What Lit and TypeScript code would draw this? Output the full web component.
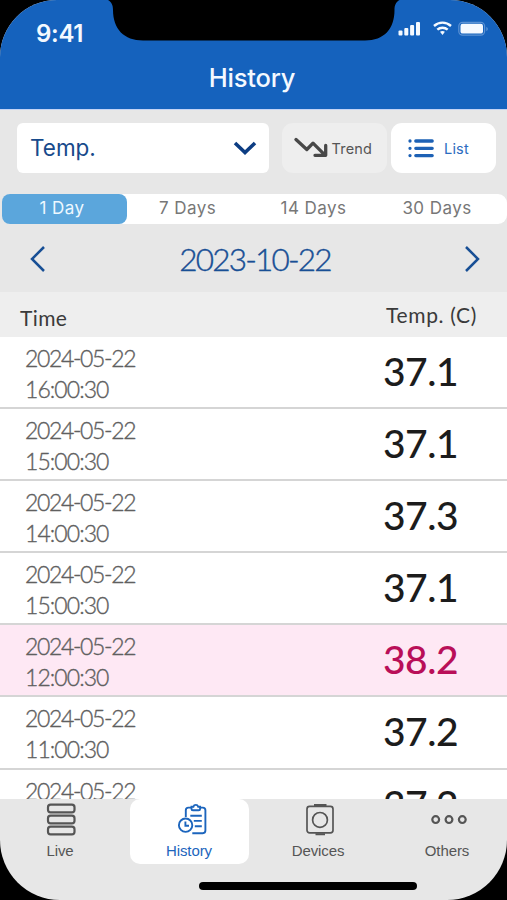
import { LitElement, html, css, svg } from "lit";
import { customElement } from "lit/decorators.js";
import { classMap } from "lit/directives/class-map.js";

interface Reading {
  date: string;
  time: string;
  value: string;
  alert?: boolean;
}

const READINGS: Reading[] = [
  { date: "2024-05-22", time: "16:00:30", value: "37.1" },
  { date: "2024-05-22", time: "15:00:30", value: "37.1" },
  { date: "2024-05-22", time: "14:00:30", value: "37.3" },
  { date: "2024-05-22", time: "15:00:30", value: "37.1" },
  { date: "2024-05-22", time: "12:00:30", value: "38.2", alert: true },
  { date: "2024-05-22", time: "11:00:30", value: "37.2" },
  { date: "2024-05-22", time: "", value: "37.2" },
];

const RANGES = ["1 Day", "7 Days", "14 Days", "30 Days"];

const TABS = [
  {
    name: "Live",
    icon: svg`<g stroke-width="2.200">
      <rect x="6" y="2.600" width="26.500" height="7.800" rx="2.600"/>
      <rect x="6" y="13.600" width="26.500" height="7.800" rx="2.600"/>
      <rect x="6" y="24.600" width="26.500" height="7.800" rx="2.600"/></g>`,
  },
  {
    name: "History",
    icon: svg`<g stroke-width="1.900" transform="translate(5.800 0)">
      <path d="M9 15V8.200a2.600 2.600 0 0 1 2.600-2.600H14.500M23.600 5.600H26a2.600 2.600 0 0 1 2.600 2.600V28.600a2.600 2.600 0 0 1-2.600 2.600H15.500"/>
      <path d="M14.700 4.700h1.900a2.500 2.500 0 0 1 4.800 0h1.900v2.200a1.400 1.400 0 0 1-1.400 1.400h-5.800a1.400 1.400 0 0 1-1.400-1.400z"/>
      <circle cx="8.800" cy="23.200" r="6.700"/>
      <path d="M8.600 19.500v4.200h3.600M13.500 13.700h11.500M17 18.900H25M18 24.300H25"/></g>`,
  },
  {
    name: "Devices",
    icon: svg`<g stroke-width="1.700" transform="translate(1.500 0)">
      <rect x="5.500" y="4.300" width="26" height="26.500" rx="2.600"/>
      <circle cx="18.500" cy="17.900" r="7.400"/>
      <path stroke-width="2" d="M12.500 2.900h12.500M14 32.200h9.500"/></g>`,
  },
  {
    name: "Others",
    icon: svg`<g stroke-width="2.200" transform="translate(4 0)">
      <circle cx="6.700" cy="17.600" r="3.400"/>
      <circle cx="20" cy="17.600" r="3.400"/>
      <circle cx="33.300" cy="17.600" r="3.400"/></g>`,
  },
];

@customElement("app-root")
export class AppRoot extends LitElement {
  static styles = css`
    :host {
      display: block;
      width: 507px;
      height: 900px;
      background: #000;
      overflow: hidden;
      font-family: Inter, sans-serif;
    }
    * { box-sizing: border-box; }
    svg { display: block; fill: none; flex: none; }
    .screen {
      position: relative;
      height: 900px;
      display: flex;
      flex-direction: column;
      overflow: hidden;
      background: #e7e7e7;
      border-radius: 57px 57px 60px 60px;
      white-space: nowrap;
    }
    .head {
      height: 110px;
      flex: none;
      background: #1562bd;
      border-bottom: 1px solid #c3d3f5;
      color: #f4f9ff;
    }
    .notch { position: absolute; left: 0; top: 0; }
    .status {
      height: 56px;
      padding: 10px 18px 0 36px;
      display: flex;
      justify-content: space-between;
    }
    .signals { margin-top: 9px; }
    .clock { font-size: 24px; line-height: 47px; font-weight: 600; letter-spacing: -0.300px; }
    .title {
      text-align: center;
      font-size: 25.500px;
      line-height: 44px;
      font-weight: 500;
      letter-spacing: -0.200px;
      padding-right: 3px;
    }
    .filters {
      height: 84px;
      flex: none;
      display: flex;
      padding: 13px 11px 0 17px;
    }
    .select, .mode {
      height: 49.500px;
      border-radius: 8px;
      background: #fff;
      display: flex;
      align-items: center;
    }
    .select {
      width: 251.500px;
      padding: 0 12px 0 13px;
      justify-content: space-between;
      color: #174a8b;
      font-size: 22.500px;
      letter-spacing: 0;
      border-radius: 6px;
      margin-right: 13px;
    }
    .mode { width: 105px; font-size: 14.500px; border-radius: 11px; letter-spacing: 0.200px; padding-top: 2px; }
    .trend { background: #eee; color: #555; padding-left: 12px; gap: 4px; margin-right: 4.500px; }
    .list { color: #2b6cc0; padding-left: 16px; gap: 9px; }
    .mode svg { margin-top: -2px; }
    .ranges {
      height: 30px;
      flex: none;
      margin: 0 0 0 2px;
      border-radius: 9px;
      background: #fff;
      display: grid;
      grid-template-columns: 125px 121px 131px 1fr;
      color: #777;
      font-size: 17px;
      line-height: 29px;
      text-align: center;
      letter-spacing: 0.450px;
    }
    .range.on { background: #5ba6dc; color: #eef8ff; border-radius: 8px; padding-right: 5px; }
    .range:last-child { padding-right: 12px; }
    .day {
      height: 68px;
      flex: none;
      display: flex;
      align-items: center;
      justify-content: space-between;
      padding: 2px 26px 0 29px;
      font-family: Lato, sans-serif;
      font-weight: 300;
      font-size: 31.500px;
      color: #184f95;
      letter-spacing: -1.800px;
      -webkit-text-stroke: 0.400px currentColor;
    }
    .columns {
      height: 45px;
      flex: none;
      background: #eee;
      display: flex;
      justify-content: space-between;
      padding: 0 30px 0 20px;
      font-family: Lato, sans-serif;
      font-size: 21px;
      color: #3a3a3a;
      letter-spacing: 0.400px;
    }
    .col-time { line-height: 52px; }
    .col-temp { line-height: 46px; letter-spacing: 0.650px; }
    .rows { flex: 1; min-height: 0; overflow: hidden; background: #fff; }
    .row {
      height: 72.100px;
      border-bottom: 2px solid #d5d5d5;
      padding: 6px 49px 0 25px;
      display: flex;
      justify-content: space-between;
      font-family: Lato, sans-serif;
    }
    .row.alert { background: #fee8f4; }
    .when {
      font-size: 23px;
      line-height: 31px;
      font-weight: 300;
      color: #606060;
      letter-spacing: -1.350px;
      -webkit-text-stroke: 0.350px currentColor;
    }
    .time { letter-spacing: -0.950px; }
    .value {
      font-size: 39px;
      line-height: 57px;
      font-weight: 500;
      font-kerning: none;
      color: #1c1c1c;
      width: 75px;
      letter-spacing: -0.500px;
    }
    .alert .value { color: #b90f58; }
    .tabs {
      height: 101px;
      flex: none;
      display: grid;
      grid-template-columns: 119px 119px 119px 119px;
      justify-content: center;
      column-gap: 10px;
      padding-left: 1px;
      position: relative;
      font-family: "Liberation Sans", sans-serif;
    }
    .tab {
      height: 65px;
      border-radius: 10px;
      display: flex;
      flex-direction: column;
      align-items: center;
      color: #555;
      font-size: 15px;
      letter-spacing: -0.100px;
      line-height: 17px;
      padding-top: 3px;
      padding-right: 1px;
      gap: 5px;
    }
    .tab svg { stroke: currentColor; }
    .tab.on { color: #1c65bd; background: #fff; }
    .homebar {
      position: absolute;
      left: 199px;
      bottom: 10px;
      width: 218px;
      height: 8.500px;
      border-radius: 5px;
      background: #000;
    }
  `;

  render() {
    return html`
      <div class="screen">
        <div class="head">
          <svg class="notch" width="507" height="42" viewBox="0 0 507 42">
            <path fill="#000" d="M108 0C111.500 2 113 5 113 10C113 29 124 40.500 143 40.500H365C384 40.500 394.500 29 394.500 10C394.500 5 396 2 399.500 0Z"/>
          </svg>
          <div class="status">
            <span class="clock">9:41</span>
            <svg class="signals" width="92" height="20" viewBox="0 0 92 20">
              <g fill="#f4f9ff">
                <rect x="1.500" y="11.500" width="4" height="5" rx="1"/>
                <rect x="7.300" y="9" width="4" height="7.500" rx="1"/>
                <rect x="13.100" y="6" width="4" height="10.500" rx="1"/>
                <rect x="19" y="3" width="4" height="13.500" rx="1"/>
                <path d="M43 12.800c1.300-1.100 3.600-1.100 4.900 0L45.500 16z"/>
                <rect x="63.500" y="4.800" width="22.500" height="9.800" rx="2.200"/>
              </g>
              <g stroke="#f4f9ff" stroke-width="2.400">
                <path d="M37 7c4.900-4.500 12.100-4.500 17 0"/>
                <path d="M40.300 10.700c3-2.700 7.400-2.700 10.400 0"/>
              </g>
              <rect x="61.800" y="3.300" width="25.800" height="12.800" rx="3.800" stroke="#5b92d4" stroke-width="1.200"/>
              <path d="M89.300 8v4c1-.300 1.500-1 1.500-2s-.500-1.700-1.500-2z" fill="#5b92d4"/>
            </svg>
          </div>
          <div class="title">History</div>
        </div>

        <div class="filters">
          <div class="select">
            <span>Temp.</span>
            <svg width="24" height="16" viewBox="0 0 24 16">
              <path d="M2 3l10 9.500L22 3" stroke="#0d3d83" stroke-width="3.600"/>
            </svg>
          </div>
          <div class="mode trend">
            <svg width="34" height="24" viewBox="0 0 34 24">
              <path d="M2 3.500l10.800 10 6.200-6.300L30.500 18.700M21 19.300h10.700V9.500" stroke="#484848" stroke-width="3.300" stroke-linecap="round" stroke-linejoin="round"/>
            </svg>
            <span>Trend</span>
          </div>
          <div class="mode list">
            <svg width="28" height="22" viewBox="0 0 28 22">
              <path d="M8.800 4h16.400M8.800 11.300h16.400M8.800 18.600h16.400M3 4h.01M3 11.300h.01M3 18.600h.01" stroke="#1d61b5" stroke-width="3.300" stroke-linecap="round"/>
            </svg>
            <span>List</span>
          </div>
        </div>

        <div class="ranges">
          ${RANGES.map((r, i) => html`<div class=${classMap({ range: true, on: i === 0 })}>${r}</div>`)}
        </div>

        <div class="day">
          <svg width="18" height="28" viewBox="0 0 18 28">
            <path d="M15 2L3 14l12 12" stroke="#184f95" stroke-width="2.500"/>
          </svg>
          <span>2023-10-22</span>
          <svg width="18" height="28" viewBox="0 0 18 28">
            <path d="M3 2l12 12L3 26" stroke="#184f95" stroke-width="2.500"/>
          </svg>
        </div>

        <div class="columns">
          <span class="col-time">Time</span>
          <span class="col-temp">Temp. (C)</span>
        </div>

        <div class="rows">
          ${READINGS.map(
            (r) => html`<div class=${classMap({ row: true, alert: !!r.alert })}>
              <div class="when">
                <div>${r.date}</div>
                <div class="time">${r.time}</div>
              </div>
              <div class="value">${r.value}</div>
            </div>`
          )}
        </div>

        <div class="tabs">
          ${TABS.map(
            (t) => html`<div class=${classMap({ tab: true, on: t.name === "History" })}>
              <svg width=${t.name === "Others" ? 44 : 37} height="35">${t.icon}</svg>
              <span>${t.name}</span>
            </div>`
          )}
          <div class="homebar"></div>
        </div>
      </div>
    `;
  }
}
